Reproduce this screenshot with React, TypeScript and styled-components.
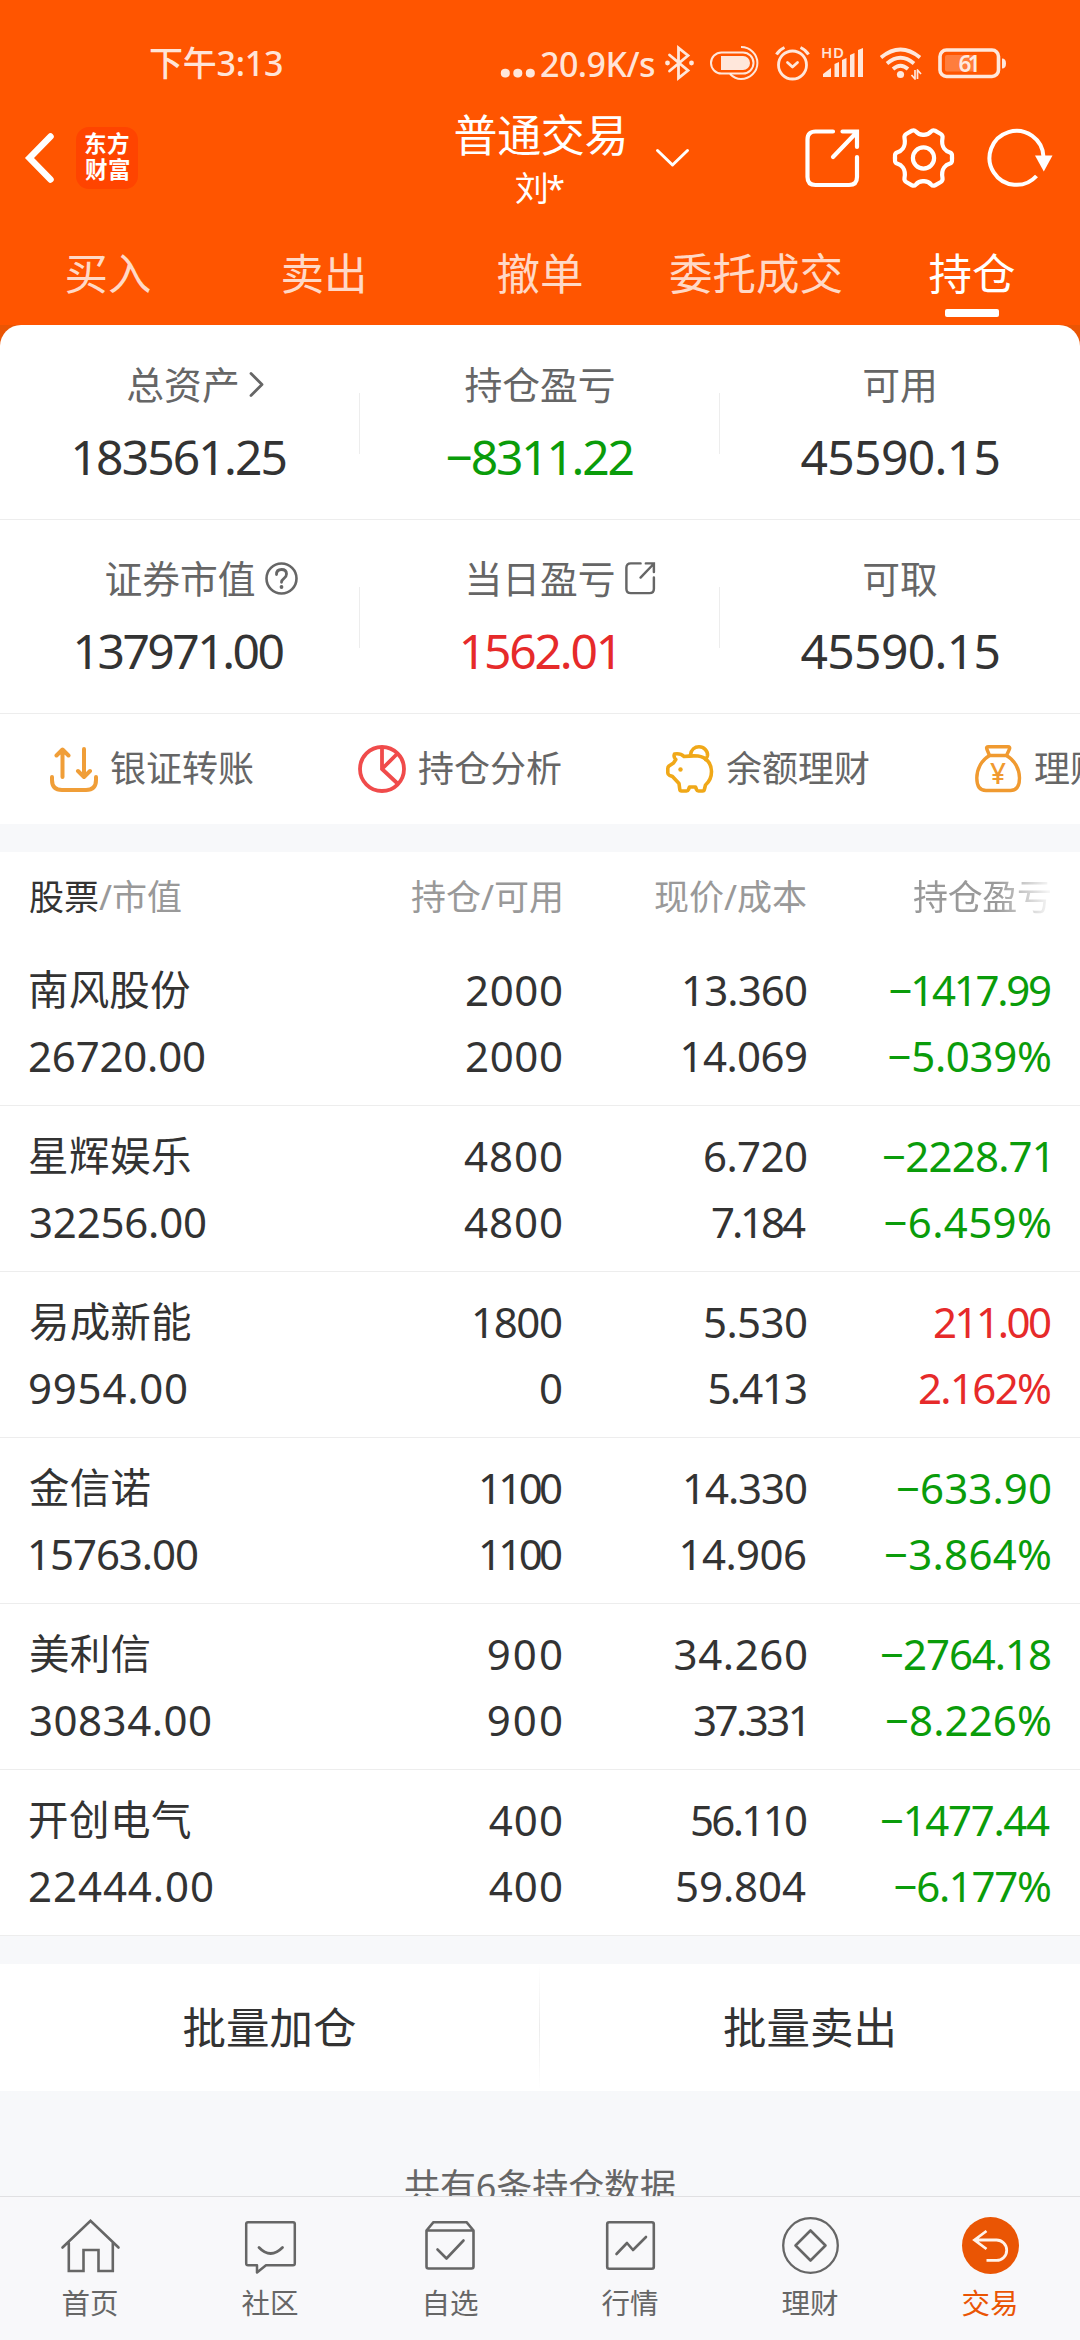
import React from "react";
import styled, { createGlobalStyle } from "styled-components";

const FAMILY = '"Noto Sans", "Noto Sans CJK SC", sans-serif';

const C = {
  brand: "#ff5500",
  active: "#ea5504",
  ink: "#333333",
  label: "#666666",
  muted: "#999999",
  up: "#e62a2a",
  down: "#0a9c0a",
  line: "#ededed",
  ground: "#f7f8fa",
};

const Global = createGlobalStyle`
  *, *::before, *::after { box-sizing: border-box; }
  html, body { margin: 0; padding: 0; background: ${C.ground}; }
  body { font-family: ${FAMILY}; color: ${C.ink}; }
  svg { display: block; flex: none; overflow: visible; }
`;

/* ---------- text with an exact drawn width ---------- */

const measurer = document.createElement("canvas").getContext("2d")!;

const TextRun = styled.span<{ $size: number; $weight: number; $color: string }>`
  display: inline-block;
  flex: none;
  white-space: nowrap;
  line-height: 1;
  font-size: ${(p) => p.$size}px;
  font-weight: ${(p) => p.$weight};
  color: ${(p) => p.$color};
`;

type FitProps = {
  text: string;
  width: number;
  size: number;
  weight?: number;
  color?: string;
  children?: React.ReactNode;
};

/* Tracks the text so that its ink spans the given width, and trims side bearings. */
function Fit({ text, width, size, weight = 400, color = "inherit", children }: FitProps) {
  measurer.font = `${weight} ${size}px ${FAMILY}`;
  const m = measurer.measureText(text);
  const right = m.actualBoundingBoxRight + (text.endsWith("1") ? size * 0.075 : 0);
  const ink = m.actualBoundingBoxLeft + right;
  const count = Array.from(text).length;
  const spacing = count > 1 ? (width - ink) / (count - 1) : 0;
  return (
    <TextRun
      $size={size}
      $weight={weight}
      $color={color}
      style={{
        letterSpacing: spacing,
        marginLeft: m.actualBoundingBoxLeft,
        marginRight: -(m.width - right + spacing),
      }}
    >
      {children ?? text}
    </TextRun>
  );
}

/* ---------- frame ---------- */

const Screen = styled.div`
  display: flex;
  flex-direction: column;
  width: 1080px;
  height: 2340px;
  overflow: hidden;
  background: ${C.ground};
`;

const Content = styled.main`
  flex: 1;
  min-height: 0;
  overflow: hidden;
`;

/* ---------- header ---------- */

const Header = styled.header`
  flex: none;
  background: ${C.brand};
  color: #fff;
`;

const StatusBar = styled.div`
  display: flex;
  align-items: center;
  height: 98px;
  padding: 28px 74px 0 150px;
  color: rgba(255, 255, 255, 0.86);
`;

const Speed = styled.div`
  display: flex;
  align-items: baseline;
  gap: 6px;
  margin-left: auto;
  padding-bottom: 13px;
`;

const StatusIcons = styled.div`
  display: flex;
  align-items: center;
  gap: 16px;
  margin-left: 10px;
`;

const TitleBar = styled.div`
  display: grid;
  grid-template-columns: 1fr 176px 1fr;
  align-items: center;
  height: 120px;
`;

const TitleLeft = styled.div`
  display: flex;
  align-items: center;
  gap: 22px;
  padding-left: 25px;
`;

const Logo = styled.div`
  display: flex;
  flex-direction: column;
  align-items: center;
  justify-content: center;
  gap: 4px;
  width: 62px;
  height: 62px;
  padding-bottom: 2px;
  border-radius: 13px;
  background: #ff4400;
`;

const TitleText = styled.div`
  display: flex;
  flex-direction: column;
  align-items: center;
  gap: 14px;
  padding-top: 1px;
`;

const TitleRight = styled.div`
  display: flex;
  align-items: center;
  gap: 34px;
  padding: 0 28px;
`;

const Expand = styled.div`
  margin-right: auto;
`;

const Tabs = styled.nav`
  display: grid;
  grid-template-columns: repeat(5, 216px);
  height: 107px;
`;

const Tab = styled.div<{ $active?: boolean }>`
  display: flex;
  flex-direction: column;
  align-items: center;
  padding-top: 33px;
  line-height: 44px;
  font-size: 43.5px;
  color: ${(p) => (p.$active ? "#fff" : "rgba(255,255,255,0.78)")};

  &::after {
    content: "";
    width: 54px;
    height: 8px;
    margin-top: 14px;
    border-radius: 2px;
    background: ${(p) => (p.$active ? "#fff" : "transparent")};
  }
`;

/* ---------- account summary ---------- */

const SummaryBack = styled.section`
  background: ${C.active};
`;

const Summary = styled.div`
  border-radius: 21px 21px 0 0;
  background: #fff;
`;

const SummaryRow = styled.div<{ $height: number }>`
  display: grid;
  grid-template-columns: repeat(3, 360px);
  height: ${(p) => p.$height}px;
  border-bottom: 1px solid ${C.line};
`;

const Metric = styled.div<{ $divided?: boolean }>`
  display: flex;
  flex-direction: column;
  align-items: center;
  justify-content: flex-end;
  gap: 29px;
  padding-bottom: 38px;
  background: linear-gradient(${C.line}, ${C.line}) no-repeat right 0 bottom 65px / ${(p) =>
      p.$divided ? "1px 61px" : "0 0"};
`;

const MetricLabel = styled.div<{ $indent?: number }>`
  position: relative;
  padding-left: ${(p) => p.$indent ?? 0}px;
  font-size: 37.8px;
  line-height: 38px;
  color: ${C.label};
`;

const LabelIcon = styled.span`
  position: absolute;
  top: 0;
  bottom: 2px;
  left: calc(100% + 9px);
  display: flex;
  align-items: center;
`;

/* ---------- shortcuts ---------- */

const Shortcuts = styled.div`
  display: grid;
  grid-template-columns: repeat(4, 308px);
  height: 110px;
  padding-left: 50px;
  overflow: hidden;
`;

const Shortcut = styled.div`
  display: flex;
  align-items: center;
  gap: 12px;
  font-size: 36px;
  line-height: 36px;
  white-space: nowrap;
  color: ${C.label};
`;

/* ---------- holdings table ---------- */

const Holdings = styled.section`
  margin-top: 28px;
  background: #fff;
`;

const Row = styled.div`
  display: grid;
  grid-template-columns: 270.5px 260.5px 245px 244px;
  padding: 0 30px;
`;

const HeadRow = styled(Row)`
  height: 88px;
  align-items: center;
`;

const HeadCell = styled.div<{ $end?: boolean; $fade?: boolean }>`
  display: flex;
  justify-content: ${(p) => (p.$end ? "flex-end" : "flex-start")};
  color: ${C.muted};
  mask-image: ${(p) => (p.$fade ? "linear-gradient(to right, #000 78%, rgba(0,0,0,0.08) 100%)" : "none")};
`;

const Strong = styled.span`
  color: ${C.ink};
`;

const DataRow = styled(Row)`
  height: 166px;
  padding-top: 17px;
  padding-bottom: 16px;
  border-bottom: 1px solid ${C.line};
`;

const Cell = styled.div<{ $end?: boolean; $tone?: string }>`
  display: grid;
  grid-template-rows: 66px 66px;
  align-items: center;
  justify-items: ${(p) => (p.$end ? "end" : "start")};
  color: ${(p) => p.$tone ?? C.ink};
`;

/* ---------- batch actions, footer ---------- */

const Actions = styled.div`
  display: grid;
  grid-template-columns: 539px 1px 540px;
  align-items: center;
  height: 127px;
  margin-top: 28px;
  background: #fff;
`;

const ActionDivider = styled.div`
  height: 100%;
  background: linear-gradient(#fff, #ececec 50%, #fff);
`;

const Action = styled.div`
  padding-bottom: 1px;
  text-align: center;
  font-size: 43.5px;
  line-height: 44px;
`;

const Footnote = styled.div`
  display: flex;
  justify-content: center;
  padding-top: 78px;
`;

const BottomNav = styled.nav`
  flex: none;
  display: grid;
  grid-template-columns: repeat(6, 180px);
  height: 144px;
  border-top: 1px solid #e0e0e2;
  background: #f8f8fa;
`;

const NavItem = styled.div<{ $active?: boolean }>`
  display: flex;
  flex-direction: column;
  align-items: center;
  padding-top: 20px;
  color: ${(p) => (p.$active ? C.active : C.label)};
  font-size: 28.5px;
  line-height: 30px;
`;

const NavIcon = styled.div`
  display: flex;
  align-items: center;
  justify-content: center;
  height: 57px;
  margin-bottom: 14px;
`;

/* ---------- icons ---------- */

const line = (width: number) => ({
  fill: "none",
  stroke: "currentColor",
  strokeWidth: width,
  strokeLinecap: "round" as const,
  strokeLinejoin: "round" as const,
});

const Bluetooth = () => (
  <svg width="29" height="34" viewBox="0 0 29 34">
    <path {...line(2.8)} strokeLinejoin="miter" d="M4.5 9 23 24.5 13.5 32V2L23 9.5 4.5 25" />
    <circle cx="2.5" cy="17" r="2.4" fill="currentColor" />
    <circle cx="26.5" cy="17" r="2.4" fill="currentColor" />
  </svg>
);

const Power = () => (
  <svg width="49" height="34" viewBox="0 0 49 34">
    <rect {...line(2)} x="1" y="6.5" width="42.5" height="21" rx="10.5" />
    <path fill="currentColor" d="M11 10h22a7 7 0 0 1 0 14H11z" />
    <path {...line(2)} strokeLinecap="butt" d="M31 1a16.4 16 0 0 1 0 32q-6 0-11-5" />
  </svg>
);

const AlarmSvg = styled.svg`
  margin-right: -4px;
`;

const Alarm = () => (
  <AlarmSvg width="35" height="34" viewBox="0 0 35 34">
    <circle {...line(2.8)} cx="17.5" cy="19" r="14" />
    <path {...line(2.8)} d="M12.5 16.5l5 4.5 5-4.5" />
    <path {...line(3)} strokeLinecap="butt" d="M1.5 8.5Q4 4 9.5 1.5M33.5 8.5Q31 4 25.5 1.5" />
  </AlarmSvg>
);

const Signal = () => (
  <svg width="42" height="34" viewBox="0 0 42 34" fill="currentColor">
    <text x="-1" y="11.5" fontSize="15" fontWeight="600" fontFamily={FAMILY} textLength="23">
      HD
    </text>
    <path d="M1 31v-3l8-6v9zM12.5 18l4.5-2v15h-4.5zM20 14l4.5-2v19H20zM28 9l4.5-2v24H28zM36 4l5-2v29h-5z" />
  </svg>
);

const Wifi = () => (
  <svg width="42" height="34" viewBox="0 0 42 34">
    <path {...line(3.8)} strokeLinecap="butt" d="M1 11.5Q20.5-4.5 40 11.5M7 17.5Q20.5 6 34 17.5M13 23Q20.5 16.5 28 23" />
    <circle cx="20.5" cy="28.5" r="3.6" fill="currentColor" />
    <path {...line(1.7)} strokeLinecap="butt" d="M31.5 29l3.5 4V24M41 28l-3.5-4v9" />
  </svg>
);

const Battery = () => (
  <svg width="68" height="30" viewBox="0 0 68 30">
    <rect {...line(3.6)} x="2" y="2" width="58.5" height="26.5" rx="6.5" />
    <rect x="7" y="7" width="31" height="16.5" rx="2" fill="rgba(255,255,255,0.24)" />
    <path fill="currentColor" d="M64 10.5q4 0 4 5t-4 5z" />
    <text x="31.5" y="23.5" fontSize="22.5" fontWeight="600" fontFamily={FAMILY} textAnchor="middle" textLength="22" fill="currentColor">
      61
    </text>
  </svg>
);

const Back = () => (
  <svg width="29" height="50" viewBox="0 0 29 50">
    <path {...line(6.5)} strokeLinejoin="miter" d="M25.5 3.5 4.5 25l21 21.5" />
  </svg>
);

const ChevronDown = () => (
  <svg width="33" height="18" viewBox="0 0 33 18">
    <path {...line(3)} d="M1.5 1.5l15 14.5 15-14.5" />
  </svg>
);

const Share = ({ size, stroke }: { size: number; stroke: number }) => (
  <svg width={size} height={(size * 58) / 54} viewBox="0 0 54 58">
    <path {...line(stroke)} d="M28 2.5H10.5Q2.5 2.5 2.5 10.5V48q0 8 8 8H44q8 0 8-8V28" />
    <path {...line(stroke)} strokeLinejoin="miter" d="M28 28 51 4M37.5 2.5H52V18" />
  </svg>
);

const GearQuarter = (p: { transform?: string }) => (
  <path
    {...line(4.2)}
    transform={p.transform}
    d="M30.5 6.8C34.5 6.8 36.5 5.5 38.2 3.4Q39.8 1.6 42 2.7L47.8 6Q50 7.4 49.5 10C48.6 14.5 49.2 17.8 51.2 20.6C52.6 22.6 54.6 23.8 57 24.5Q59 25.3 59 27.5V30.5"
  />
);

const Gear = () => (
  <svg width="61" height="60" viewBox="0 0 61 60">
    <GearQuarter />
    <GearQuarter transform="translate(61 0) scale(-1 1)" />
    <GearQuarter transform="translate(0 60) scale(1 -1)" />
    <GearQuarter transform="translate(61 60) scale(-1 -1)" />
    <circle {...line(4.2)} cx="30.5" cy="30" r="10.6" />
  </svg>
);

const Refresh = () => (
  <svg width="64" height="58" viewBox="0 0 64 58">
    <path {...line(4)} strokeLinecap="butt" d="M55.5 28A27 27 0 1 0 48.5 47" />
    <path fill="currentColor" d="M47 26.5h17.5L55.8 42.5z" />
  </svg>
);

const ChevronRight = () => (
  <svg width="15" height="25" viewBox="0 0 15 25">
    <path {...line(2.8)} d="M2 1.5l11 11-11 11" />
  </svg>
);

const Help = () => (
  <svg width="33" height="33" viewBox="0 0 33 33">
    <circle {...line(2.6)} cx="16.5" cy="16.5" r="15" />
    <path {...line(2.8)} d="M11.5 12.5q0-5 5-5t5 4.5q0 2.5-2.5 4.3t-2.5 4" />
    <circle cx="16.5" cy="25" r="1.9" fill="currentColor" />
  </svg>
);

const Transfer = () => (
  <svg width="48" height="48" viewBox="0 -2 48 48" color="#f09e38">
    <path {...line(4)} d="M12.5 3v27M6.5 8.5l6-6 6 6M34 2v27M28 24l6 6 6-6" />
    <path {...line(4)} d="M2 30v3q0 10 10 10h24q10 0 10-10v-3" />
  </svg>
);

const Pie = () => (
  <svg width="48" height="48" viewBox="0 0 48 48" color="#f04b4b">
    <circle {...line(3.8)} cx="24" cy="24" r="22" />
    <path {...line(3.8)} d="M24 3v21L39 9M24 24l15 14" />
  </svg>
);

const Piggy = () => (
  <svg width="48" height="48" viewBox="0 0 48 48" color="#f0a818">
    <path
      {...line(3.6)}
      d="M8.5 9Q14.5 8 18 11.5Q26 10.5 32 11C40 12 45.5 18 45.5 26.5C45.5 32 43.5 36.5 39.5 40L38.5 44Q38.2 46 36.5 46H32.5Q31 46 30.5 44.5L29.5 42H23.5L22.5 44.5Q22 46 20.5 46H15.5Q14 46 13.8 44.5L13 38.5L6.5 31.5L3.5 30.3Q1.8 29.5 1.8 28V23.5Q1.8 22 3 21L7.5 18L9.8 14.5Q7.2 12 8.5 9Z"
    />
    <path {...line(3.6)} d="M24.5 10C25 4.5 29 1.8 33 1.8C38 1.8 42 6 41.5 10.5Q41 13 39.5 14.5" />
    <circle cx="14.5" cy="24.5" r="2.2" fill="currentColor" />
  </svg>
);

const MoneyBag = () => (
  <svg width="48" height="48" viewBox="-1 0 48 48" color="#f09a30">
    <path {...line(3.4)} d="M13.5 1.8h19.5q2.5 0 1.5 2.2L31.5 10.5H14.5L11.8 4q-1-2.2 1.7-2.2z" />
    <path {...line(3.4)} d="M14.5 10.5C6 15.5 1.8 24.5 1.8 33Q1.8 45.5 11 45.5H35.5Q44.5 45.5 44.5 33C44.5 24.5 40 15.5 31.5 10.5" />
    <text x="23" y="38.5" fontSize="28" fontWeight="500" fontFamily={FAMILY} textAnchor="middle" fill="currentColor">
      ¥
    </text>
  </svg>
);

const Home = () => (
  <svg width="59" height="54" viewBox="0 0 59 54">
    <path {...line(2.6)} strokeLinejoin="miter" d="M1.5 28.5 29.5 1.8l28 26.7M7.8 24v28H22.5V31H37.5V52H51.8V24" />
  </svg>
);

const Chat = () => (
  <svg width="51" height="50" viewBox="0 0 51 50">
    <path {...line(2.5)} d="M3 1.2h45q1.8 0 1.8 1.8v39.5q0 1.8-1.8 1.8H21L12 51.5V44.3H3q-1.8 0-1.8-1.8V3q0-1.8 1.8-1.8z" />
    <path {...line(2.8)} d="M14 26.5q11.5 12 23.5 0" />
  </svg>
);

const BoxCheck = () => (
  <svg width="50" height="49" viewBox="0 0 50 49">
    <path {...line(2.6)} d="M1.5 9.5 8.5 1.2h33L48.5 9.5V45.5q0 2-2 2h-43q-2 0-2-2zM1.5 9.5h47" />
    <path {...line(2.6)} d="M12.5 28.5l9 9 17-18" />
  </svg>
);

const Chart = () => (
  <svg width="49" height="49" viewBox="0 0 49 49">
    <rect {...line(2.6)} x="1.2" y="1.2" width="46.6" height="46.6" rx="2" />
    <path {...line(2.6)} d="M10.5 33 21 22l6 7 13-13" />
  </svg>
);

const Finance = () => (
  <svg width="57" height="57" viewBox="0 0 57 57">
    <circle {...line(2.3)} cx="28.5" cy="28.5" r="27.3" />
    <path {...line(2.6)} d="M28.5 13.5l15 15-15 15-15-15z" />
  </svg>
);

const Trade = () => (
  <svg width="57" height="57" viewBox="0 0 57 57">
    <circle cx="28.5" cy="28.5" r="28.5" fill={C.active} />
    <g color="#fff3ea">
      <path {...line(2.8)} strokeLinecap="butt" strokeLinejoin="miter" d="M24.5 14 12.5 23l12 9M13 23H34.5a10.2 10.2 0 0 1 0 20.4H24.5" />
    </g>
  </svg>
);

/* ---------- data ---------- */

/* Each figure is its text and the width of its ink. */
type Figure = [text: string, width: number];

type Holding = {
  tone: string;
  stock: [Figure, Figure];
  volume: [Figure, Figure];
  price: [Figure, Figure];
  profit: [Figure, Figure];
};

const holdings: Holding[] = [
  {
    tone: C.down,
    stock: [["南风股份", 160], ["26720.00", 174]],
    volume: [["2000", 94], ["2000", 94]],
    price: [["13.360", 122], ["14.069", 123.5]],
    profit: [["−1417.99", 159.5], ["−5.039%", 160.5]],
  },
  {
    tone: C.down,
    stock: [["星辉娱乐", 160], ["32256.00", 175]],
    volume: [["4800", 97], ["4800", 97]],
    price: [["6.720", 101], ["7.184", 94]],
    profit: [["−2228.71", 166], ["−6.459%", 164.5]],
  },
  {
    tone: C.up,
    stock: [["易成新能", 160], ["9954.00", 156]],
    volume: [["1800", 87], ["0", 22]],
    price: [["5.530", 101], ["5.413", 96.5]],
    profit: [["211.00", 115], ["2.162%", 130]],
  },
  {
    tone: C.down,
    stock: [["金信诺", 119.5], ["15763.00", 167]],
    volume: [["1100", 80], ["1100", 80]],
    price: [["14.330", 121], ["14.906", 124.5]],
    profit: [["−633.90", 152], ["−3.864%", 164]],
  },
  {
    tone: C.down,
    stock: [["美利信", 119.5], ["30834.00", 180]],
    volume: [["900", 72.3], ["900", 72.3]],
    price: [["34.260", 131.5], ["37.331", 112]],
    profit: [["−2764.18", 168], ["−8.226%", 163]],
  },
  {
    tone: C.down,
    stock: [["开创电气", 160], ["22444.00", 182]],
    volume: [["400", 72.3], ["400", 72.3]],
    price: [["56.110", 114], ["59.804", 129]],
    profit: [["−1477.44", 168], ["−6.177%", 154.5]],
  },
];

type MetricData = {
  label: string;
  indent?: number;
  icon?: React.ReactNode;
  value: Figure;
  tone?: string;
};

const metrics: { height: number; items: MetricData[] }[] = [
  {
    height: 195,
    items: [
      { label: "总资产", indent: 6, icon: <ChevronRight />, value: ["183561.25", 211] },
      { label: "持仓盈亏", value: ["−8311.22", 185], tone: C.down },
      { label: "可用", value: ["45590.15", 197] },
    ],
  },
  {
    height: 194,
    items: [
      { label: "证券市值", icon: <Help />, value: ["137971.00", 207] },
      { label: "当日盈亏", icon: <Share size={30} stroke={4.4} />, value: ["1562.01", 154.7], tone: C.up },
      { label: "可取", value: ["45590.15", 197] },
    ],
  },
];

const shortcuts = [
  { icon: <Transfer />, label: "银证转账" },
  { icon: <Pie />, label: "持仓分析" },
  { icon: <Piggy />, label: "余额理财" },
  { icon: <MoneyBag />, label: "理财" },
];

const navItems = [
  { icon: <Home />, label: "首页" },
  { icon: <Chat />, label: "社区" },
  { icon: <BoxCheck />, label: "自选" },
  { icon: <Chart />, label: "行情" },
  { icon: <Finance />, label: "理财" },
  { icon: <Trade />, label: "交易", active: true },
];

const tabs = ["买入", "卖出", "撤单", "委托成交", "持仓"];

function Pair({ figures, end, tone }: { figures: [Figure, Figure]; end?: boolean; tone?: string }) {
  return (
    <Cell $end={end} $tone={tone}>
      {figures.map(([text, width], i) => (
        <Fit key={i} text={text} width={width} size={/\d/.test(text) ? 42 : 40.5} />
      ))}
    </Cell>
  );
}

export default function App() {
  return (
    <Screen>
      <Global />
      <Header>
        <StatusBar>
          <Fit text="下午3:13" width={132} size={34} weight={500} />
          <Speed>
            <Fit text="..." width={35} size={52} weight={700} />
            <Fit text="20.9K/s" width={114} size={34} weight={500} />
          </Speed>
          <StatusIcons>
            <Bluetooth />
            <Power />
            <Alarm />
            <Signal />
            <Wifi />
            <Battery />
          </StatusIcons>
        </StatusBar>
        <TitleBar>
          <TitleLeft>
            <Back />
            <Logo>
              <Fit text="东方" width={44} size={22.5} weight={700} />
              <Fit text="财富" width={44} size={22.5} weight={700} />
            </Logo>
          </TitleLeft>
          <TitleText>
            <Fit text="普通交易" width={169} size={44} />
            <Fit text="刘*" width={48.5} size={34} />
          </TitleText>
          <TitleRight>
            <Expand>
              <ChevronDown />
            </Expand>
            <Share size={54} stroke={4.2} />
            <Gear />
            <Refresh />
          </TitleRight>
        </TitleBar>
        <Tabs>
          {tabs.map((t) => (
            <Tab key={t} $active={t === "持仓"}>
              {t}
            </Tab>
          ))}
        </Tabs>
      </Header>

      <Content>
        <SummaryBack>
          <Summary>
            {metrics.map((row, r) => (
              <SummaryRow key={r} $height={row.height}>
                {row.items.map((m, i) => (
                  <Metric key={m.label} $divided={i < 2}>
                    <MetricLabel $indent={m.indent}>
                      {m.label}
                      {m.icon && <LabelIcon>{m.icon}</LabelIcon>}
                    </MetricLabel>
                    <Fit text={m.value[0]} width={m.value[1]} size={48} color={m.tone ?? C.ink} />
                  </Metric>
                ))}
              </SummaryRow>
            ))}
            <Shortcuts>
              {shortcuts.map((s) => (
                <Shortcut key={s.label}>
                  {s.icon}
                  {s.label}
                </Shortcut>
              ))}
            </Shortcuts>
          </Summary>
        </SummaryBack>

        <Holdings>
          <HeadRow>
            <HeadCell>
              <Fit text="股票/市值" width={151} size={35}>
                <Strong>股票</Strong>/市值
              </Fit>
            </HeadCell>
            <HeadCell $end>
              <Fit text="持仓/可用" width={150} size={35} />
            </HeadCell>
            <HeadCell $end>
              <Fit text="现价/成本" width={151} size={35} />
            </HeadCell>
            <HeadCell $end $fade>
              <Fit text="持仓盈亏" width={137} size={35} />
            </HeadCell>
          </HeadRow>
          {holdings.map((h) => (
            <DataRow key={h.stock[0][0]}>
              <Pair figures={h.stock} />
              <Pair figures={h.volume} end />
              <Pair figures={h.price} end />
              <Pair figures={h.profit} end tone={h.tone} />
            </DataRow>
          ))}
        </Holdings>

        <Actions>
          <Action>批量加仓</Action>
          <ActionDivider />
          <Action>批量卖出</Action>
        </Actions>

        <Footnote>
          <Fit text="共有6条持仓数据" width={270} size={36} color={C.label} />
        </Footnote>
      </Content>

      <BottomNav>
        {navItems.map((n) => (
          <NavItem key={n.label} $active={n.active}>
            <NavIcon>{n.icon}</NavIcon>
            {n.label}
          </NavItem>
        ))}
      </BottomNav>
    </Screen>
  );
}
